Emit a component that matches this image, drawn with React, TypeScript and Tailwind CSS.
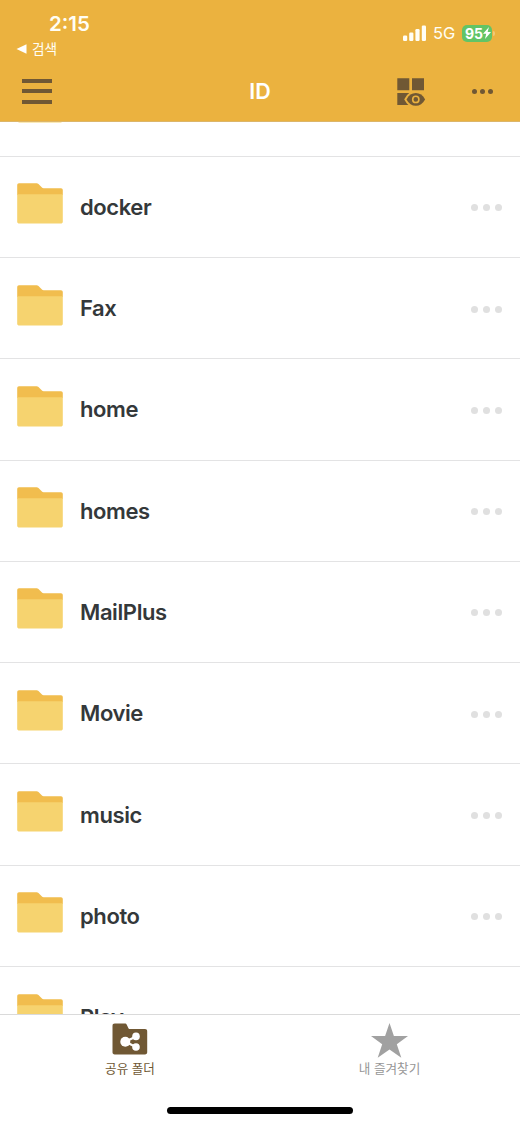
import { useState } from "react";
import clsx from "clsx";

type Folder = {
  id: number;
  name: string;
};

type TabKey = "shared" | "favorites";

const folders: Folder[] = [
  { id: 1, name: "" },
  { id: 2, name: "docker" },
  { id: 3, name: "Fax" },
  { id: 4, name: "home" },
  { id: 5, name: "homes" },
  { id: 6, name: "MailPlus" },
  { id: 7, name: "Movie" },
  { id: 8, name: "music" },
  { id: 9, name: "photo" },
  { id: 10, name: "Play" },
];

/* ===================== ICONS ===================== */
function SignalIcon() {
  return (
    <svg width="24" height="17" viewBox="0 0 24 17" fill="#fffef5">
      <rect x="0" y="10.5" width="4.2" height="5.5" rx="1.2" />
      <rect x="6.2" y="7.5" width="4.2" height="8.5" rx="1.2" />
      <rect x="12.4" y="4" width="4.2" height="12" rx="1.2" />
      <rect x="18.8" y="0.5" width="4.2" height="15.5" rx="1.2" />
    </svg>
  );
}

function LayoutEyeIcon() {
  return (
    <svg width="29" height="29" viewBox="0 0 29 29">
      <path d="M.3.200h12v12H.3zM15 .2h12v12H15zM.3 15h12v12H.3z" fill="#705834" />
      <path
        d="M9.500 21.400c2.300-4.200 5.400-6.300 9.300-6.300s7 2.100 9.300 6.300c-2.300 4.200-5.400 6.300-9.300 6.300s-7-2.100-9.300-6.300z"
        fill="#705834"
        stroke="#ebb23f"
        strokeWidth="4"
        paintOrder="stroke"
      />
      <circle cx="18.800" cy="21.400" r="3.100" fill="#705834" stroke="#ebb23f" strokeWidth="1.600" />
    </svg>
  );
}

function FolderIcon() {
  return (
    <svg width="46" height="41" viewBox="0 0 46 41" className="shrink-0">
      <path
        d="M2 .3h17.600c.8 0 1.300.2 1.900.8l3.200 3.200c.6.6 1.100.9 2 .9H44c1.100 0 1.800.8 1.800 1.900V12H.2V2.200C.2 1.100.9.3 2 .3z"
        fill="#f1bd4e"
      />
      <path d="M.2 11.200h45.600v27.200c0 1.300-.8 2.100-2.100 2.100H2.300C1 40.500.2 39.700.2 38.400z" fill="#f6d36f" />
    </svg>
  );
}

function SharedFolderIcon() {
  return (
    <svg width="36" height="32" viewBox="0 0 36 32">
      <path
        d="M2.800.6h10c1 0 1.600.4 2 1.200l1.500 3.200c.3.800.8 1 1.600 1H33c1.400 0 2.200.8 2.200 2.200v21c0 1.400-.8 2.200-2.200 2.200H2.700C1.300 31.400.5 30.600.5 29.200V2.900C.5 1.400 1.300.6 2.800.6z"
        fill="#705834"
      />
      <path d="M24 13.400 13.300 18.800 24 24" fill="none" stroke="#fff" strokeWidth="2.200" />
      <g fill="#fff">
        <circle cx="13.300" cy="18.800" r="5" />
        <circle cx="24" cy="13.400" r="3.800" />
        <circle cx="24" cy="24" r="3.800" />
      </g>
    </svg>
  );
}

function StarIcon() {
  return (
    <svg width="37" height="35" viewBox="0 0 37 35" fill="#a1a1a1">
      <path d="M18.500 0 22.900 13H37L25.800 21.200 30.300 34.700 18.500 26.500 6.700 34.700 11.200 21.200 0 13h14.100z" />
    </svg>
  );
}

/* ===================== HEADER ===================== */
function StatusBar() {
  return (
    <div className="flex h-[61px] justify-between pl-4 pr-[25px] text-[#fffef5]">
      <div className="pt-3">
        <div className="pl-[33px] text-[20.5px] font-semibold leading-6">2:15</div>
        <button className="mt-1 flex items-center gap-[5px] text-[13.700px] leading-[18px]">
          <svg width="11" height="10" viewBox="0 0 11 10" fill="#fff">
            <path d="M10.500.3v9.400L.5 5z" />
          </svg>
          검색
        </button>
      </div>
      <div className="flex h-[66px] items-center">
        <SignalIcon />
        <span className="ml-[6px] w-[29px] text-[16.5px]">5G</span>
        <div className="flex h-[17px] w-[30px] items-center rounded-[5px] bg-[#62c466] pl-[3px] text-[14px] font-bold text-white">
          95
          <svg width="8" height="12" viewBox="0 0 8 12" fill="#fff">
            <path d="M6 0 0 6.800h3.200L2 12l6-7H4.600z" />
          </svg>
        </div>
        <div className="ml-px h-[5px] w-[2px] rounded-r bg-[#f1c978]" />
      </div>
    </div>
  );
}

function Header() {
  return (
    <header className="h-[122px] border-b border-[#dcb66a] bg-[#ebb23f]">
      <StatusBar />
      <div className="grid h-[60px] grid-cols-[1fr_auto_1fr] items-center pl-[22px] pr-[27px]">
        <button aria-label="Menu" className="flex w-[30px] flex-col gap-[6.500px]">
          <span className="h-1 bg-[#705834]" />
          <span className="h-1 bg-[#705834]" />
          <span className="h-1 bg-[#705834]" />
        </button>
        <h1 className="pl-[5px] text-[21.5px] font-semibold text-white">ID</h1>
        <div className="flex items-center justify-end gap-[46px]">
          <button aria-label="View" className="pt-[3px]">
            <LayoutEyeIcon />
          </button>
          <button aria-label="More" className="flex gap-[2.5px] pt-px">
            <span className="size-[5.5px] rounded-full bg-[#705834]" />
            <span className="size-[5.5px] rounded-full bg-[#705834]" />
            <span className="size-[5.5px] rounded-full bg-[#705834]" />
          </button>
        </div>
      </div>
    </header>
  );
}

/* ===================== LIST ===================== */
function FolderRow({ folder }: { folder: Folder }) {
  return (
    <li className="flex h-[101.3px] shrink-0 items-center border-b border-[#e3e3e4] pl-[17px] pr-[18px]">
      <div className="pb-[6px]">
        <FolderIcon />
      </div>
      <span className="ml-[17px] flex-1 pt-px text-[22px] font-semibold tracking-[-0.4px] text-[#34383a]">
        {folder.name}
      </span>
      <button aria-label="Options" className="flex gap-[5px] pt-[2px]">
        <span className="size-[7px] rounded-full bg-[#e0e0e0]" />
        <span className="size-[7px] rounded-full bg-[#e0e0e0]" />
        <span className="size-[7px] rounded-full bg-[#e0e0e0]" />
      </button>
    </li>
  );
}

export default function App() {
  const [tab, setTab] = useState<TabKey>("shared");

  return (
    <div className="flex h-[1125px] w-[520px] flex-col overflow-hidden bg-white font-['Inter','Noto_Sans_CJK_KR',sans-serif]">
      <Header />

      <main className="h-[892px] overflow-hidden">
        {/* list is scrolled past its first row */}
        <ul className="-mt-[66.7px] flex flex-col">
          {folders.map((folder) => (
            <FolderRow key={folder.id} folder={folder} />
          ))}
        </ul>
      </main>

      {/* Tab bar */}
      <nav className="flex h-[111px] flex-col border-t border-[#dadada] bg-white">
        <div className="grid grid-cols-2">
          <button
            onClick={() => setTab("shared")}
            className={clsx("flex flex-col items-center pt-2", tab === "shared" ? "text-[#705834]" : "text-[#969696]")}
          >
            <SharedFolderIcon />
            <span className="mt-[5px] text-[12.6px] leading-[18px]">공유 폴더</span>
          </button>
          <button
            onClick={() => setTab("favorites")}
            className={clsx(
              "flex flex-col items-center pr-px pt-2",
              tab === "favorites" ? "text-[#705834]" : "text-[#969696]"
            )}
          >
            <StarIcon />
            <span className="mt-[2px] text-[12.6px] leading-[18px]">내 즐겨찾기</span>
          </button>
        </div>
        <div className="mx-auto mb-[11px] mt-auto h-[7px] w-[186px] rounded-full bg-black" />
      </nav>
    </div>
  );
}
